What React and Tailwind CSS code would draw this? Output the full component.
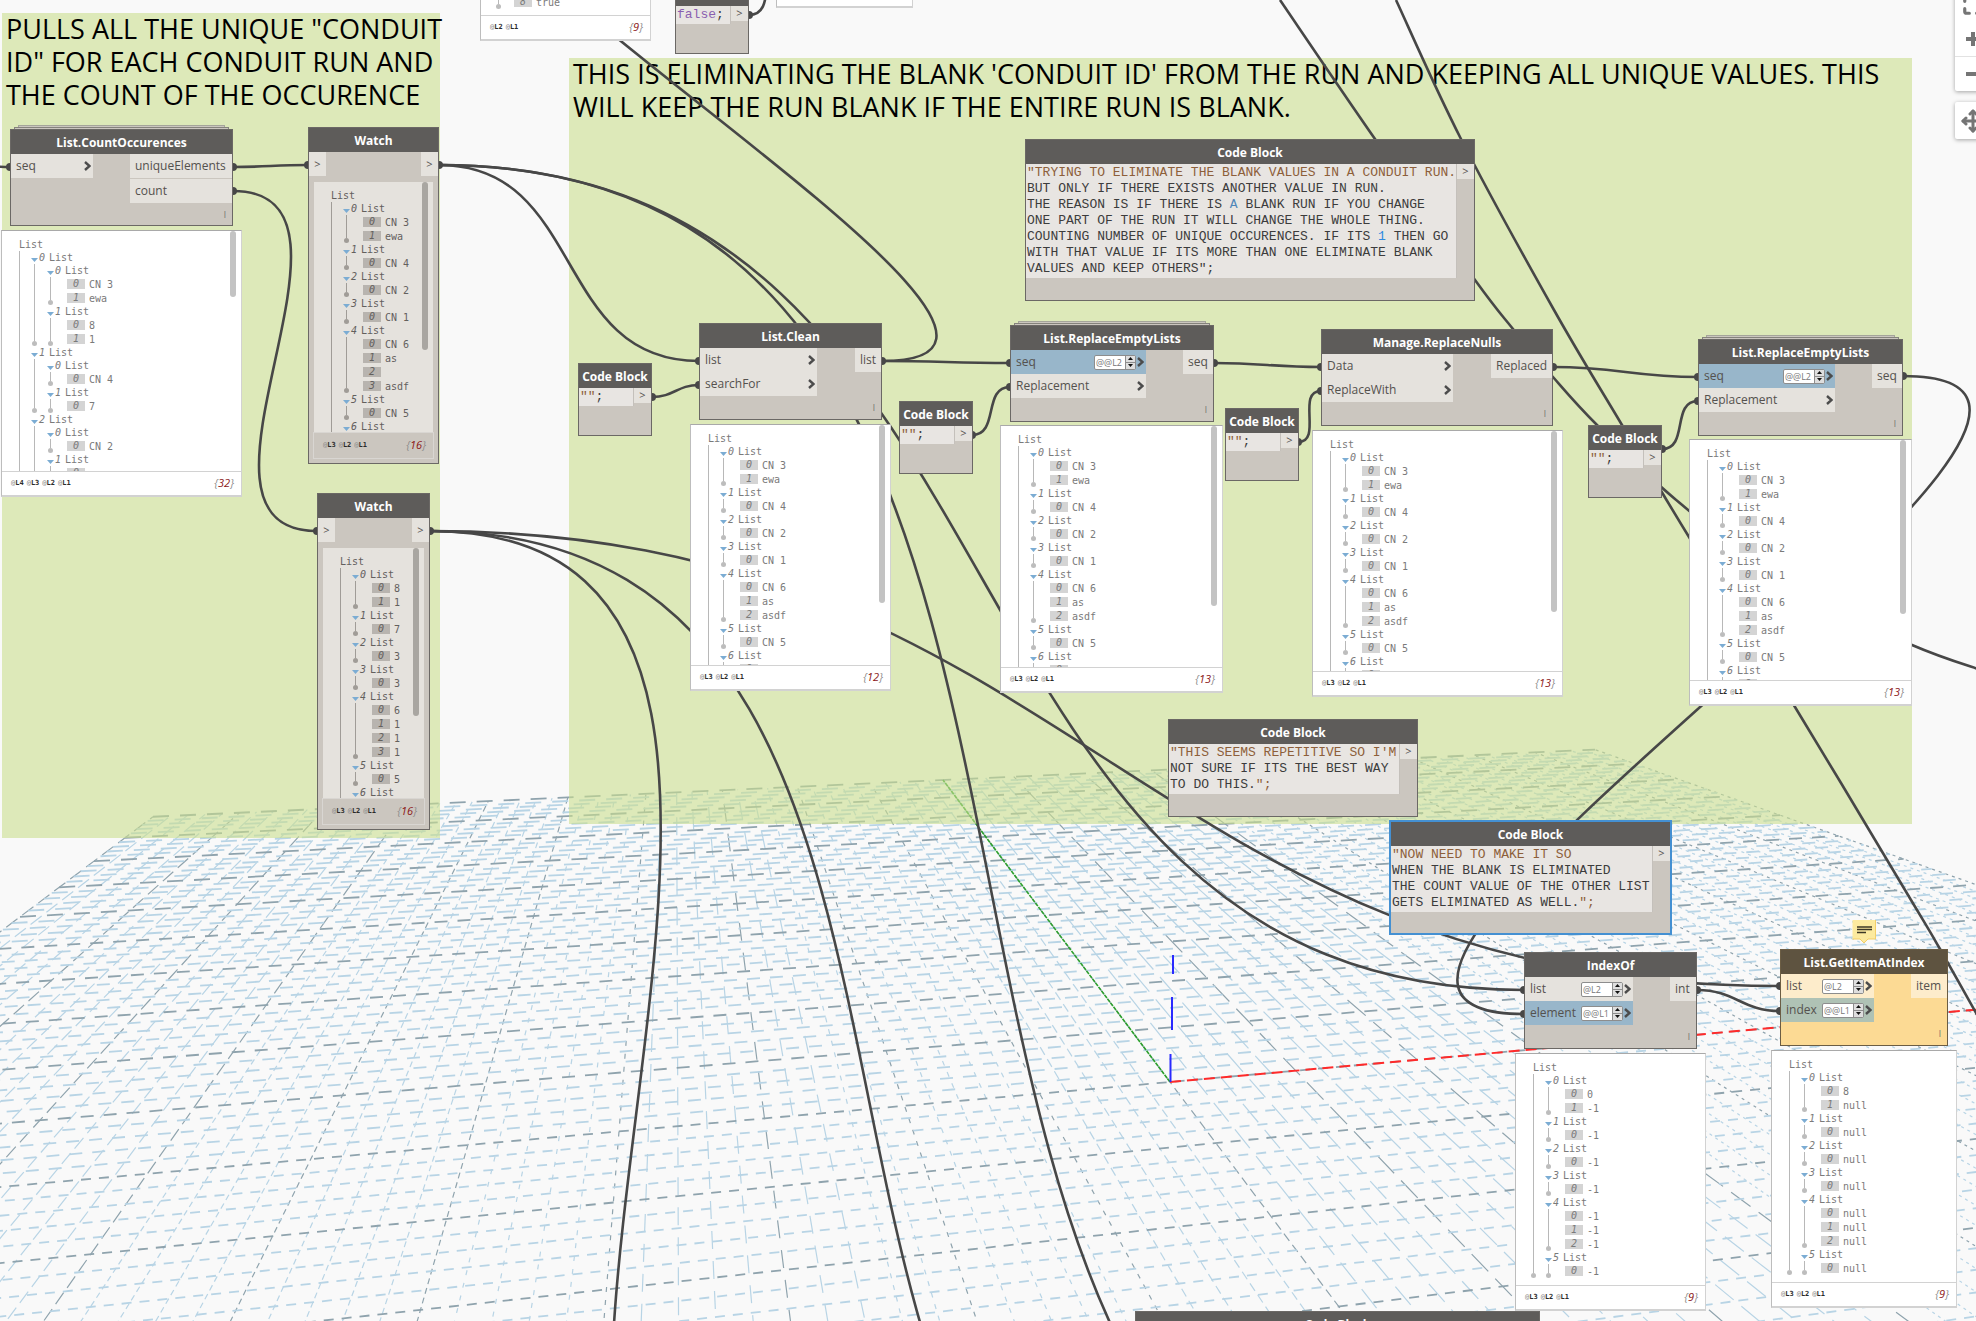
import { useId, useState } from 'react';
import { Maximize, Minus, Move, Plus } from 'lucide-react';
import clsx from 'clsx';

const WIRE = '#474747';

// ---- background grid -------------------------------------------------

// world (grid cells) -> screen
const project = (x, y) => {
  const w = 1 + 0.01769 * x + 0.0848 * y;
  return [(1170 + 148.7 * x + 57.27 * y) / w, (1082 + 7.65 * x + 35.94 * y) / w];
};

const GRID_MIN = -10;
const GRID_MAX = 10;
const GRID_NEAR = -4;
const STEP = 0.2;

const range = (from, to) => {
  const out = [];
  for (let i = Math.round(from / STEP); i <= Math.round(to / STEP); i++) out.push(i);
  return out;
};

const GridLine = ({ from, to, major, dash, width }) => (
  <line
    x1={from[0]}
    y1={from[1]}
    x2={to[0]}
    y2={to[1]}
    stroke={major ? '#8fa3ad' : '#b8d4e5'}
    strokeWidth={width}
    strokeDasharray={dash}
  />
);

const Grid = () => {
  const rows = range(GRID_NEAR, GRID_MAX);
  const cols = range(GRID_MIN, GRID_MAX);
  return (
    <g>
      {cols.map((i) => {
        const x = i * STEP;
        let dash = '14 6';
        if (x > -7) dash = '6 4';
        if (x > -5) dash = '5 8';
        if (x > -4) dash = '18 12';
        if (x > -2.6) dash = '5 7';
        if (x > -1) dash = '9 5';
        if (x > 0) dash = '24 10';
        if (x > 3) dash = '3 4';
        return (
          <GridLine
            key={`c${i}`}
            from={project(x, GRID_NEAR)}
            to={project(x, GRID_MAX)}
            major={i % 5 === 0}
            dash={dash}
            width={1.2}
          />
        );
      })}
      {rows.map((i) => {
        const y = i * STEP;
        const on = y > 5 ? 16 : y > 0 ? 13 : 10;
        const off = y > 5 ? 11 : y > 0 ? 10 : 8;
        return (
          <GridLine
            key={`r${i}`}
            from={project(GRID_MIN, y)}
            to={project(GRID_MAX, y)}
            major={i % 5 === 0}
            dash={`${on} ${off}`}
            width={1.8}
          />
        );
      })}
    </g>
  );
};

const Axes = () => {
  const [ox, oy] = project(0, 0);
  const [gx, gy] = project(0, GRID_MAX);
  const [rx, ry] = project(GRID_MAX, 0);
  return (
    <g fill="none">
      <line x1={ox} y1={oy} x2={gx} y2={gy} stroke="#2ca02c" strokeWidth="1.6" strokeDasharray="4 1" />
      <line x1={ox} y1={oy} x2={rx} y2={ry} stroke="#ff2a2a" strokeWidth="2" strokeDasharray="11 6" />
      <path d="M1173 955V974M1172 997V1030M1170.5 1054V1082" stroke="#2a2aff" strokeWidth="2" />
    </g>
  );
};

// ---- wires -----------------------------------------------------------

const bezier = ([x1, y1, x2, y2]) => {
  const off = 0.45 * Math.hypot(x2 - x1, y2 - y1);
  return `M${x1} ${y1}C${x1 + off} ${y1} ${x2 - off} ${y2} ${x2} ${y2}`;
};

const spline = (pts) => {
  let d = `M${pts[0][0]} ${pts[0][1]}`;
  for (let i = 0; i < pts.length - 1; i++) {
    const p0 = pts[i - 1] || pts[i];
    const p1 = pts[i];
    const p2 = pts[i + 1];
    const p3 = pts[i + 2] || p2;
    d += `C${p1[0] + (p2[0] - p0[0]) / 6} ${p1[1] + (p2[1] - p0[1]) / 6} ${p2[0] - (p3[0] - p1[0]) / 6} ${p2[1] - (p3[1] - p1[1]) / 6} ${p2[0]} ${p2[1]}`;
  }
  return d;
};

const WIRES = [
  [-60, 163, 10, 167],
  [233, 167, 308, 165],
  [233, 191, 317, 531],
  [439, 165, 699, 361],
  [439, 165, 1524, 990],
  [439, 165, 1541, 1605],
  [430, 531, 1780, 986],
  [430, 531, 1308, 1670],
  [430, 531, 842, 1700],
  [882, 361, 516, -154],
  [882, 361, 1010, 363],
  [652, 397, 699, 385],
  [972, 435, 1010, 387],
  [1214, 363, 1321, 367],
  [1298, 442, 1321, 391],
  [1553, 367, 1698, 377],
  [1662, 449, 1698, 401],
  [1903, 376, 1524, 1014],
  [1697, 990, 1780, 1011],
  [749, 15, 785, -40],
];

const LONG_WIRES = [
  [[1280, 0], [1375, 139], [1475, 280], [1513, 329], [1553, 377], [1597, 425], [1675, 499], [1790, 587], [1912, 645], [1984, 671]],
  [[1396, 0], [1461, 139], [1554, 310], [1622, 425], [1689, 537], [1795, 707], [1911, 900], [1940, 949], [1980, 1020]],
];

const DOTS = [
  [10, 167], [233, 167], [233, 191], [308, 165], [439, 165], [317, 531], [430, 531],
  [699, 361], [699, 385], [882, 361], [652, 397], [972, 435], [1010, 363], [1010, 387],
  [1214, 363], [1298, 442], [1321, 367], [1321, 391], [1553, 367], [1662, 449],
  [1698, 377], [1698, 401], [1903, 376], [1524, 990], [1524, 1014], [1697, 990],
  [1780, 986], [1780, 1011], [749, 15],
];

const Wires = () => (
  <svg className="pointer-events-none absolute inset-0 h-full w-full" aria-hidden="true">
    <g fill="none" stroke={WIRE} strokeWidth="2.6">
      {WIRES.map((w) => <path key={w.join()} d={bezier(w)} />)}
      {LONG_WIRES.map((w) => <path key={w[0].join()} d={spline(w)} />)}
    </g>
    <g fill={WIRE}>
      {DOTS.map(([x, y]) => <circle key={`${x},${y}`} cx={x} cy={y} r="4" />)}
    </g>
  </svg>
);

// ---- list preview ----------------------------------------------------

const Guide = ({ dark }) => (
  <div className="flex w-[6px] shrink-0 flex-col items-center">
    <div className={clsx('w-px grow', dark ? 'bg-[#a09c97]' : 'bg-[#b8b8b8]')} />
    <div className={clsx('size-[5px] rounded-full', dark ? 'bg-[#a09c97]' : 'bg-[#bdbdbd]')} />
  </div>
);

const TreeItems = ({ items, first = 0, dark }) => (
  <ul>
    {items.map((item, i) => {
      if (!Array.isArray(item)) {
        return (
          <li key={i} className="flex h-[14px] items-center pl-1">
            <span className={clsx('flex h-[10px] w-[18px] items-center justify-center italic leading-none', dark ? 'bg-[#b8b4af]' : 'bg-[#d4d4d4]')}>
              {first + i}
            </span>
            <span className="ml-1 whitespace-pre">{item}</span>
          </li>
        );
      }
      return (
        <li key={i}>
          <div className="flex h-[13px] items-center">
            <svg className="mt-1 h-[4px] w-[7px]" viewBox="0 0 7 4"><path d="M0 0h7L3.500 4z" fill="#7bacd3" /></svg>
            <span className="ml-px italic">{i}</span>
            <span className="ml-1">List</span>
          </div>
          <div className="flex">
            <Guide dark={dark} />
            <div className="ml-[10px]"><TreeItems items={item} dark={dark} /></div>
          </div>
        </li>
      );
    })}
  </ul>
);

const Tree = ({ items, first, dark }) => (
  <div className={clsx('grow pt-[7px] pl-[14px] font-["DejaVu_Sans_Mono",monospace] text-[10px] leading-[13px]', dark ? 'text-[#63605d]' : 'text-[#7a7a7a]')}>
    <div className="h-[13px] pl-[3px]">List</div>
    <div className="flex">
      <Guide dark={dark} />
      <div className="ml-[9px]"><TreeItems items={items} first={first} dark={dark} /></div>
    </div>
  </div>
);

const Levels = ({ depth, count }) => (
  <>
    <span className="flex gap-[3px] font-['DejaVu_Sans_Mono',monospace] text-[7px] text-[#8a8a8a]">
      {Array.from({ length: depth }, (_, i) => depth - i).map((n) => (
        <span key={n}>@<b className="text-[#2b2b2b]">L{n}</b></span>
      ))}
    </span>
    <span className="text-[11px] italic text-[#8c8c8c]">
      {'{'}<span className="text-[#8b1515]">{count}</span>{'}'}
    </span>
  </>
);

const Preview = ({ x, y, w, body, items, first, depth, count, thumb }) => (
  <div
    className="absolute flex flex-col border border-b-2 border-[#d2d2d2] border-t-[#a9a9a9] border-l-[#bdbdbd] bg-white"
    style={{ left: x, top: y, width: w }}
  >
    <div className="flex overflow-hidden" style={{ height: body }}>
      {items && <Tree items={items} first={first} />}
      {thumb && <div className="mr-[5px] w-[6px] shrink-0 rounded-full bg-[#c3c3c3]" style={{ height: thumb }} />}
    </div>
    {depth && (
      <div className="flex h-[24px] items-center justify-between border-t border-[#d2d2d2] pr-[7px] pl-[9px]">
        <Levels depth={depth} count={count} />
      </div>
    )}
  </div>
);

// ---- nodes -----------------------------------------------------------

const THEMES = {
  normal: {
    head: 'bg-[#5e5c5a]',
    body: 'bg-[#cbc6bf] border-[#6b6865]',
    port: 'bg-[#e5e2dd]',
    level: 'bg-[#98b6ca]',
  },
  warning: {
    head: 'bg-[#5e5340]',
    body: 'bg-[#fcda94] border-[#6b5d44]',
    port: 'bg-[#fdeccb]',
    level: 'bg-[#afc2b5]',
  },
};

const NodeTitle = ({ theme, children }) => (
  <h3 className={clsx('flex h-[24px] items-center justify-center whitespace-nowrap pt-px text-[12px] font-bold text-white', theme.head)}>
    {children}
  </h3>
);

const LevelBox = ({ id, initial }) => {
  const [value, setValue] = useState(initial);
  const shift = (by) => setValue((v) => v.replace(/\d+/, (n) => Math.max(1, Number(n) + by)));
  return (
    <span className="ml-auto flex h-[15px] w-[42px] rounded-[2px] border border-[#8d8d8d] bg-white">
      <input
        id={id}
        value={value}
        onChange={(e) => setValue(e.target.value)}
        className="w-[30px] min-w-0 bg-transparent pl-px text-[9px] leading-none text-[#777] outline-none"
      />
      <span className="flex w-[10px] shrink-0 flex-col gap-px bg-[#8d8d8d] pl-px">
        <button type="button" aria-label="Level up" onClick={() => shift(1)} className="flex flex-1 items-center justify-center bg-[#dedede]">
          <svg className="h-[3px] w-[5px]" viewBox="0 0 5 3"><path d="M0 3h5L2.500 0z" fill="#111" /></svg>
        </button>
        <button type="button" aria-label="Level down" onClick={() => shift(-1)} className="flex flex-1 items-center justify-center bg-[#dedede]">
          <svg className="h-[3px] w-[5px]" viewBox="0 0 5 3"><path d="M0 0h5L2.500 3z" fill="#111" /></svg>
        </button>
      </span>
    </span>
  );
};

const InPort = ({ port, theme }) => {
  const id = useId();
  return (
    <div className={clsx('flex h-[24px] items-center pr-[2px] pl-[5px]', port.level && port.level.startsWith('@@') ? theme.level : theme.port)}>
      {port.level ? <label htmlFor={id}>{port.name}</label> : <span>{port.name}</span>}
      {port.level && <LevelBox id={id} initial={port.level} />}
      <svg className={clsx('h-[10px] w-[7px]', port.level ? 'ml-px' : 'ml-auto')} viewBox="0 0 7 10">
        <path d="M1 1l4.500 4L1 9" fill="none" stroke="#4c4c4c" strokeWidth="2.400" />
      </svg>
    </div>
  );
};

const FunctionNode = ({ x, y, w, title, inputs, inWidth, outputs, outWidth, stacked, variant = 'normal' }) => {
  const theme = THEMES[variant];
  return (
    <article className="absolute" style={{ left: x, top: stacked ? y - 4 : y, width: w }}>
      {stacked && (
        <>
          <div className="mx-2 h-[2px] border border-b-0 border-[#a5a59a] bg-[#cbc6bf]" />
          <div className="mx-1 h-[2px] border border-b-0 border-[#85837c] bg-[#cbc6bf]" />
        </>
      )}
      <div className={clsx('h-[97px] border', theme.body)}>
        <NodeTitle theme={theme}>{title}</NodeTitle>
        <div className="flex items-start justify-between text-[12px] text-[#54514e]">
          <div style={{ width: inWidth }}>
            {inputs.map((p) => <InPort key={p.name} port={p} theme={theme} />)}
          </div>
          <div className="flex flex-col gap-px" style={{ width: outWidth }}>
            {outputs.map((name) => (
              <div key={name} className={clsx('flex h-[24px] items-center pl-[5px]', theme.port)}>{name}</div>
            ))}
          </div>
        </div>
        <div className={clsx('flex justify-end pr-[6px] text-[9px] leading-none text-[#77736f]', inputs.length + outputs.length > 2 ? 'pt-[7px]' : 'pt-[31px]')}>l</div>
      </div>
    </article>
  );
};

const WatchNode = ({ x, y, w, items, count }) => (
  <article className={clsx('absolute border', THEMES.normal.body)} style={{ left: x, top: y, width: w }}>
    <NodeTitle theme={THEMES.normal}>Watch</NodeTitle>
    <div className="flex justify-between text-[11px] text-[#54514e]">
      <span className="flex h-[24px] w-[17px] items-center justify-center bg-[#e5e2dd]">&gt;</span>
      <span className="flex h-[24px] w-[17px] items-center justify-center bg-[#e5e2dd]">&gt;</span>
    </div>
    <div className="mx-[5px] mt-[6px] flex h-[250px] overflow-hidden bg-[#e5e2dd]">
      <Tree items={items} dark />
      <div className="mr-[5px] h-[168px] w-[6px] shrink-0 rounded-full bg-[#a9a6a1]" />
    </div>
    <div className="mx-1 mb-1 flex h-[27px] items-center justify-between border border-[#d9d6d2] pr-[7px] pl-[9px]">
      <Levels depth={3} count={count} />
    </div>
  </article>
);

const CodeBlock = ({ x, y, w, h, selected, children }) => (
  <article
    className={clsx('absolute bg-[#cbc6bf]', selected ? 'border-2 border-[#4490d2]' : 'border border-[#6b6865]')}
    style={{ left: x, top: y, width: w, height: h }}
  >
    <NodeTitle theme={THEMES.normal}>Code Block</NodeTitle>
    <div className="flex items-start">
      <pre className="min-w-0 grow border-r border-[#c4c0bb] bg-[#e8e5e2] py-px pl-px font-['Liberation_Mono',monospace] text-[13px] leading-[16px] text-[#3c3c3c]">
        {children}
      </pre>
      <span className="flex h-[15px] w-[17px] shrink-0 items-center justify-center bg-[#e5e2dd] text-[11px] text-[#54514e]">&gt;</span>
    </div>
  </article>
);

const Str = ({ children }) => <span className="text-[#8d5f3a]">{children}</span>;

const EmptyString = (props) => (
  <CodeBlock w={74} h={73} {...props}><Str>""</Str>;</CodeBlock>
);

const Group = ({ x, y, w, h, title }) => (
  <section className="absolute bg-[#cadd8d]/60" style={{ left: x, top: y, width: w, height: h }}>
    <h2 className="-mt-px px-1 text-[27px] leading-[33px] text-black">
      {title.map((line) => <span key={line} className="block whitespace-nowrap">{line}</span>)}
    </h2>
  </section>
);

const NoteBadge = () => (
  <svg className="absolute top-[919px] left-[1852px] h-[26px] w-[24px]" viewBox="0 0 24 26" role="img" aria-label="Note">
    <path d="M.500 1h23v19h-7.500l-4 4-4-4H.500z" fill="#fcea9f" />
    <path d="M23.500 1v19h-7.500l-4 4-4-4H.500" fill="none" stroke="#f3cf68" />
    <path d="M5 8h15M5 10.500h15M5 13.500h9" stroke="#3c3827" strokeWidth="1.300" />
  </svg>
);

const ViewControls = () => (
  <div className="absolute top-[-12px] right-[-15px] flex w-[36px] flex-col gap-[11px] text-[#757575]">
    <div className="rounded-[2px] bg-white shadow-[0_1px_4px_rgba(0,0,0,0.35)]">
      <button type="button" aria-label="Zoom to fit" className="flex h-[34px] w-full items-center justify-center">
        <Maximize size={22} strokeWidth={3.5} />
      </button>
      <button type="button" aria-label="Zoom in" className="flex h-[34px] w-full items-center justify-center">
        <Plus size={24} strokeWidth={4} strokeLinecap="butt" />
      </button>
      <button type="button" aria-label="Zoom out" className="flex h-[35px] w-full items-center justify-center border-t border-[#e2e2e2]">
        <Minus size={24} strokeWidth={4} strokeLinecap="butt" />
      </button>
    </div>
    <button type="button" aria-label="Pan" className="flex h-[37px] items-center justify-center rounded-[2px] bg-white shadow-[0_1px_4px_rgba(0,0,0,0.35)]">
      <Move size={24} strokeWidth={3} />
    </button>
  </div>
);

// ---- data ------------------------------------------------------------

const CONDUITS = [['CN 3', 'ewa'], ['CN 4'], ['CN 2'], ['CN 1'], ['CN 6', 'as', 'asdf'], ['CN 5'], ['']];
const COUNTED = [[['CN 3', 'ewa'], ['8', '1']], [['CN 4'], ['7']], [['CN 2'], ['']]];
const UNIQUE = [['CN 3', 'ewa'], ['CN 4'], ['CN 2'], ['CN 1'], ['CN 6', 'as', '', 'asdf'], ['CN 5'], ['']];
const COUNTS = [['8', '1'], ['7'], ['3'], ['3'], ['6', '1', '1', '1'], ['5'], ['']];
const INDICES = [['0', '-1'], ['-1'], ['-1'], ['-1'], ['-1', '-1', '-1'], ['-1']];
const RESULT = [['8', 'null'], ['null'], ['null'], ['null'], ['null', 'null', 'null'], ['null']];

export default function App() {
  return (
    <main className="relative h-screen w-full overflow-hidden bg-[#f9f9f9] font-['Open_Sans',sans-serif]">
      <svg className="absolute inset-0 h-full w-full" aria-hidden="true">
        <Grid />
        <Axes />
      </svg>

      <Group x={2} y={13} w={438} h={825} title={['PULLS ALL THE UNIQUE "CONDUIT', 'ID" FOR EACH CONDUIT RUN AND', 'THE COUNT OF THE OCCURENCE']} />
      <Group
        x={569}
        y={58}
        w={1343}
        h={766}
        title={[
          "THIS IS ELIMINATING THE BLANK 'CONDUIT ID' FROM THE RUN AND KEEPING ALL UNIQUE VALUES. THIS",
          'WILL KEEP THE RUN BLANK IF THE ENTIRE RUN IS BLANK.',
        ]}
      />

      <Wires />

      <Preview x={480} y={-26} w={171} body={40} items={['true']} first={8} depth={2} count={9} />
      <Preview x={776} y={-34} w={137} body={39} />
      <Preview x={1} y={230} w={241} body={240} items={COUNTED} depth={4} count={32} thumb={66} />
      <Preview x={690} y={424} w={201} body={240} items={CONDUITS} depth={3} count={12} thumb={178} />
      <Preview x={1000} y={425} w={223} body={241} items={CONDUITS} depth={3} count={13} thumb={180} />
      <Preview x={1312} y={430} w={251} body={240} items={CONDUITS} depth={3} count={13} thumb={181} />
      <Preview x={1689} y={439} w={223} body={240} items={CONDUITS} depth={3} count={13} thumb={174} />
      <Preview x={1515} y={1053} w={191} body={231} items={INDICES} depth={3} count={9} />
      <Preview x={1771} y={1050} w={186} body={231} items={RESULT} depth={3} count={9} />

      <FunctionNode x={10} y={129} w={223} title="List.CountOccurences" stacked inputs={[{ name: 'seq' }]} inWidth={82} outputs={['uniqueElements', 'count']} outWidth={102} />
      <FunctionNode x={699} y={323} w={183} title="List.Clean" inputs={[{ name: 'list' }, { name: 'searchFor' }]} inWidth={117} outputs={['list']} outWidth={26} />
      <FunctionNode x={1010} y={325} w={204} title="List.ReplaceEmptyLists" stacked inputs={[{ name: 'seq', level: '@@L2' }, { name: 'Replacement' }]} inWidth={135} outputs={['seq']} outWidth={30} />
      <FunctionNode x={1321} y={329} w={232} title="Manage.ReplaceNulls" inputs={[{ name: 'Data' }, { name: 'ReplaceWith' }]} inWidth={131} outputs={['Replaced']} outWidth={61} />
      <FunctionNode x={1698} y={339} w={205} title="List.ReplaceEmptyLists" stacked inputs={[{ name: 'seq', level: '@@L2' }, { name: 'Replacement' }]} inWidth={136} outputs={['seq']} outWidth={30} />
      <FunctionNode x={1524} y={952} w={173} title="IndexOf" inputs={[{ name: 'list', level: '@L2' }, { name: 'element', level: '@@L1' }]} inWidth={108} outputs={['int']} outWidth={26} />
      <FunctionNode x={1780} y={949} w={168} title="List.GetItemAtIndex" variant="warning" inputs={[{ name: 'list', level: '@L2' }, { name: 'index', level: '@@L1' }]} inWidth={93} outputs={['item']} outWidth={36} />

      <WatchNode x={308} y={127} w={131} items={UNIQUE} count={16} />
      <WatchNode x={317} y={493} w={113} items={COUNTS} count={16} />

      <EmptyString x={578} y={363} />
      <EmptyString x={899} y={401} />
      <EmptyString x={1225} y={408} />
      <EmptyString x={1588} y={425} />
      <CodeBlock x={675} y={-19} w={74} h={73}><span className="text-[#8a5fb0]">false</span>;</CodeBlock>

      <CodeBlock x={1025} y={139} w={450} h={162}>
        <Str>"TRYING TO ELIMINATE THE BLANK VALUES IN A CONDUIT RUN.</Str>{'\n'}
        {'BUT ONLY IF THERE EXISTS ANOTHER VALUE IN RUN.\nTHE REASON IS IF THERE IS '}
        <span className="text-[#4f86b8]">A</span>
        {' BLANK RUN IF YOU CHANGE\nONE PART OF THE RUN IT WILL CHANGE THE WHOLE THING.\nCOUNTING NUMBER OF UNIQUE OCCURENCES. IF ITS '}
        <span className="text-[#2f8ae0]">1</span>
        {' THEN GO\nWITH THAT VALUE IF ITS MORE THAN ONE ELIMINATE BLANK\nVALUES AND KEEP OTHERS";'}
      </CodeBlock>
      <CodeBlock x={1168} y={719} w={250} h={98}>
        <Str>"THIS SEEMS REPETITIVE SO I'M</Str>{'\nNOT SURE IF ITS THE BEST WAY\nTO DO THIS.'}<Str>";</Str>
      </CodeBlock>
      <CodeBlock x={1389} y={820} w={283} h={115} selected>
        <Str>"NOW NEED TO MAKE IT SO</Str>{'\nWHEN THE BLANK IS ELIMINATED\nTHE COUNT VALUE OF THE OTHER LIST\nGETS ELIMINATED AS WELL.'}<Str>";</Str>
      </CodeBlock>
      <CodeBlock x={1135} y={1311} w={405} h={73}>{' '}</CodeBlock>

      <NoteBadge />
      <ViewControls />
    </main>
  );
}
